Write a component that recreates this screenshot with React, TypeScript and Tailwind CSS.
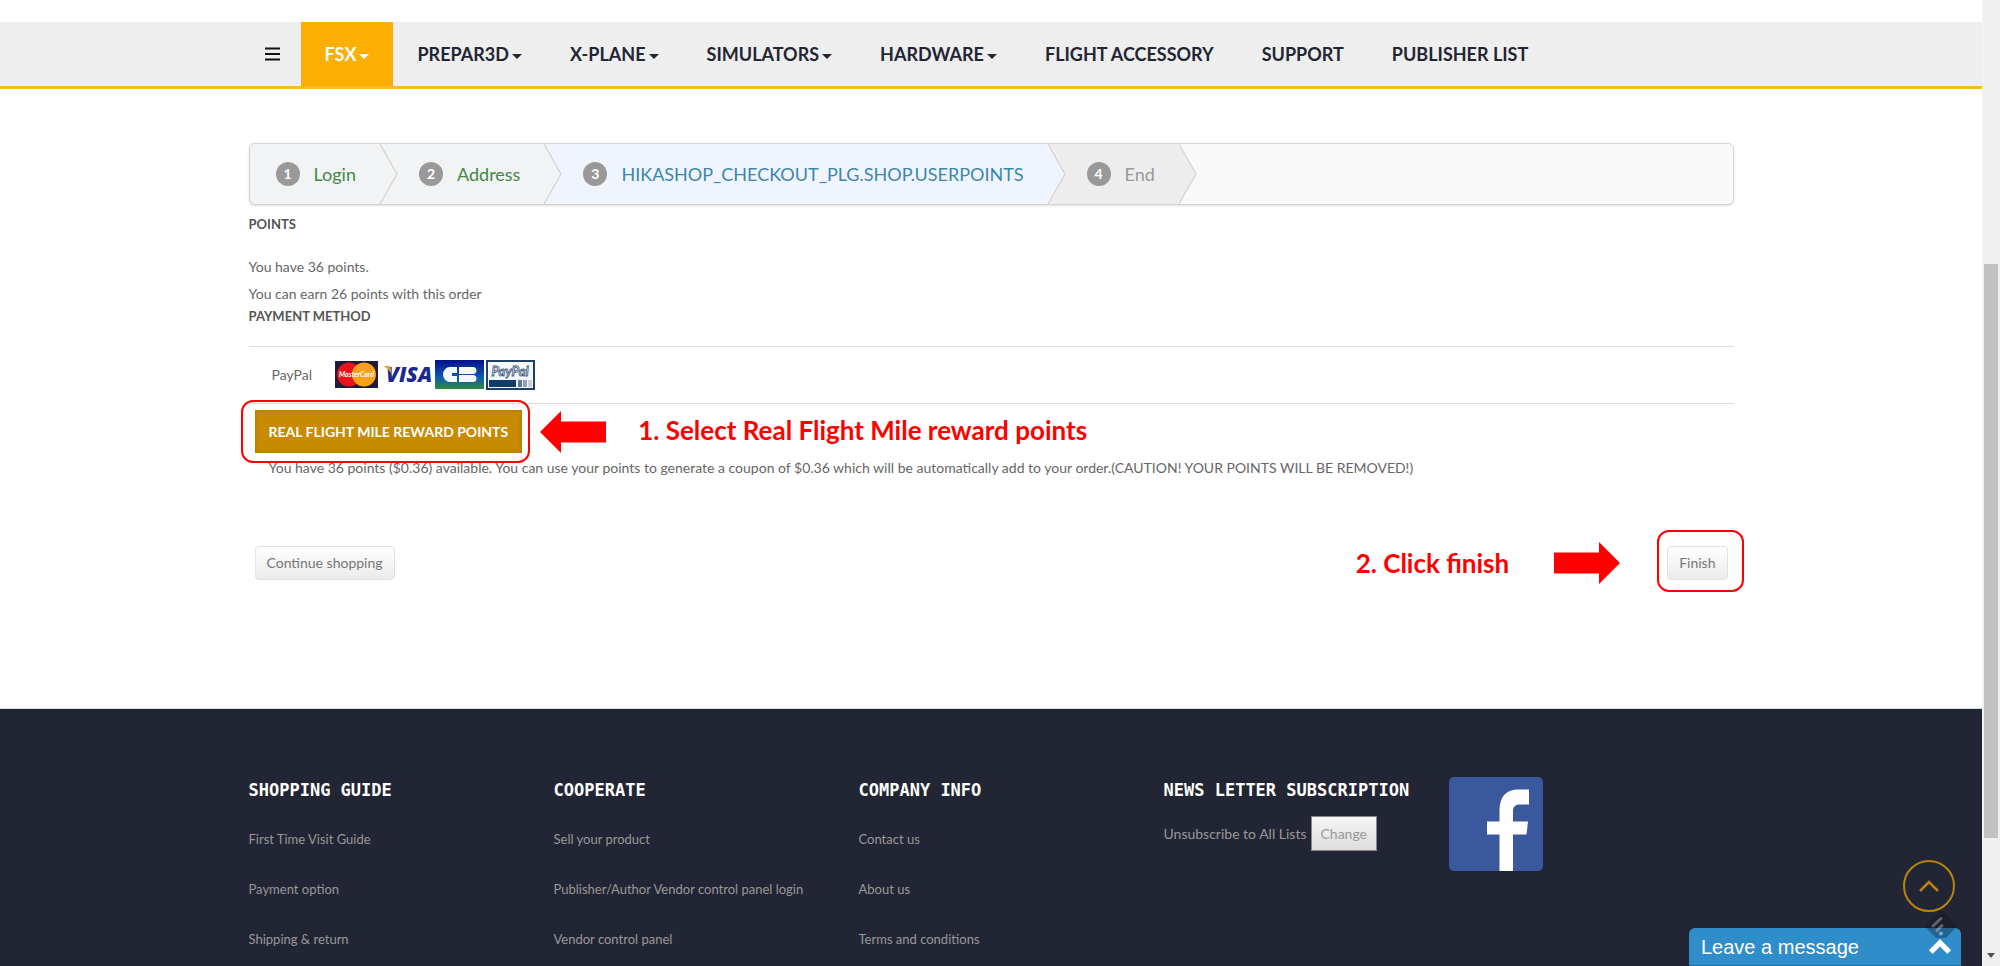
type NavItem = { label: string; caret?: boolean; active?: boolean };
type Step = { label: string; state: "done" | "current" | "next" };
type FooterColumn = { title: string; links: string[] };

const navItems: NavItem[] = [
  { label: "FSX", caret: true, active: true },
  { label: "PREPAR3D", caret: true },
  { label: "X-PLANE", caret: true },
  { label: "SIMULATORS", caret: true },
  { label: "HARDWARE", caret: true },
  { label: "FLIGHT ACCESSORY" },
  { label: "SUPPORT" },
  { label: "PUBLISHER LIST" },
];

const steps: Step[] = [
  { label: "Login", state: "done" },
  { label: "Address", state: "done" },
  { label: "HIKASHOP_CHECKOUT_PLG.SHOP.USERPOINTS", state: "current" },
  { label: "End", state: "next" },
];

const stepStyle = {
  done: { box: "bg-[#f2f3f5] text-[#468847]", fill: "#f2f3f5" },
  current: { box: "bg-[#f0f5fd] text-[#3a87ad]", fill: "#f0f5fd" },
  next: { box: "bg-[#ededed] text-[#999999]", fill: "#ededed" },
};

const footerColumns: FooterColumn[] = [
  { title: "SHOPPING GUIDE", links: ["First Time Visit Guide", "Payment option", "Shipping & return"] },
  { title: "COOPERATE", links: ["Sell your product", "Publisher/Author Vendor control panel login", "Vendor control panel"] },
  { title: "COMPANY INFO", links: ["Contact us", "About us", "Terms and conditions"] },
];

function NavBar() {
  return (
    <nav className="mt-[22px] border-b-[3px] border-[#fbb829] bg-[#eeeeee]">
      <div className="mx-auto flex h-16 max-w-[1485px] items-stretch text-lg font-bold text-[#222533]">
        <button type="button" aria-label="Menu" className="flex w-[52px] items-center pl-4">
          <svg width="15" height="14" viewBox="0 0 15 14" stroke="#111" strokeWidth="2">
            <path d="M0 1.5H15M0 7H15M0 12.5H15" />
          </svg>
        </button>
        {navItems.map((item) => (
          <a
            key={item.label}
            href="#"
            className={`flex items-center gap-[3px] px-6 whitespace-nowrap ${item.active ? "bg-[#fcaf03] text-white" : ""}`}
          >
            {item.label}
            {item.caret && (
              <svg width="10" height="5" viewBox="0 0 10 5" fill="currentColor" className="mt-1">
                <path d="M0 0H10L5 5Z" />
              </svg>
            )}
          </a>
        ))}
      </div>
    </nav>
  );
}

function Steps() {
  return (
    <ol className="flex h-[62px] rounded-md border border-[#d4d4d4] bg-[#f9f9f9] text-lg shadow-sm">
      {steps.map((step, i) => (
        <li
          key={step.label}
          className={`relative flex items-center gap-[14px] pr-6 ${i === 0 ? "rounded-l-md pl-[26px]" : "pl-[39px]"} ${stepStyle[step.state].box}`}
        >
          <span className="flex size-6 items-center justify-center rounded-full bg-[#999999] text-sm font-bold text-white">
            {i + 1}
          </span>
          <span className="whitespace-nowrap">{step.label}</span>
          {/* arrow tip, overlaps the next step */}
          <svg width="18" height="60" viewBox="0 0 18 60" className="absolute top-0 left-full z-10">
            <path d="M0 0L17 30L0 60" fill={stepStyle[step.state].fill} stroke="#d4d4d4" strokeWidth="1.3" />
          </svg>
        </li>
      ))}
    </ol>
  );
}

function CardLogos() {
  return (
    <svg width="201" height="30" viewBox="0 0 201 30" role="img" aria-label="Accepted cards">
      <defs>
        <linearGradient id="cb" x1="0" y1="0" x2="0" y2="1">
          <stop offset="0" stopColor="#04108c" />
          <stop offset="0.6" stopColor="#0c5ab0" />
          <stop offset="1" stopColor="#2e8a3c" />
        </linearGradient>
      </defs>
      <rect y="1" width="43" height="27" fill="#1f1b3d" />
      <circle cx="14" cy="14.5" r="12" fill="#e8141c" />
      <circle cx="29" cy="14.5" r="12" fill="#f9a11b" />
      <text x="21.5" y="17" fontSize="7" fontStyle="italic" fontWeight="bold" fill="#fff" textAnchor="middle" fontFamily="Lato, sans-serif">
        MasterCard
      </text>
      <text x="51" y="22" fontSize="21" fontStyle="italic" fontWeight="800" fill="#1a2a8c" fontFamily="Open Sans, sans-serif">
        VISA
      </text>
      <path d="M48.500 6H55L57 15Q54 9 48.500 6Z" fill="#f0a030" />
      <rect x="100" width="49" height="29" fill="url(#cb)" />
      <path
        d="M122 7H115A7 7.5 0 0 0 115 22H122V16H117V13H122ZM124 7H138A3 3 0 0 1 138 14H124ZM124 15H138A3 3 0 0 1 138 22H124Z"
        fill="#f2f8fc"
      />
      <rect x="152" y="1" width="47" height="28" fill="#f4f8fc" stroke="#1d4068" strokeWidth="2" />
      <text x="175" y="16" fontSize="13" fontStyle="italic" fontWeight="bold" fill="#dfe8f0" stroke="#3c5878" strokeWidth="0.8" textAnchor="middle" fontFamily="Lato, sans-serif">
        PayPal
      </text>
      <rect x="154" y="20" width="27" height="7" fill="#123a6b" />
      <path d="M183 20H187V27H183Z" fill="#5c7898" />
      <path d="M188 20H192V27H188Z" fill="#8ca0b8" />
      <path d="M193 20H197V27H193Z" fill="#c4d0dc" />
    </svg>
  );
}

function Arrow({ flip }: { flip?: boolean }) {
  return (
    <svg width="66" height="42" viewBox="0 0 66 42" fill="#ff0000" className={flip ? "rotate-180" : ""}>
      <path d="M0 21L21 0V10.5H66V31.5H21V42Z" />
    </svg>
  );
}

function SmallButton({ children }: { children: string }) {
  return (
    <button
      type="button"
      className="h-[34px] rounded border border-[#e2e2e2] bg-linear-to-b from-white to-[#ebebeb] px-[11px] text-[#777777]"
    >
      {children}
    </button>
  );
}

function Footer() {
  return (
    <footer className="flex-1 border-t border-[#d8dade] bg-[#222533] text-[#999999]">
      <div className="mx-auto grid max-w-[1485px] grid-cols-[305fr_305fr_305fr_285fr_285fr] pt-[68px]">
        {footerColumns.map((col) => (
          <section key={col.title}>
            <h3 className="font-['DejaVu_Sans_Mono',monospace] text-[17px] leading-[27px] font-bold text-white">{col.title}</h3>
            <ul className="mt-[10px] text-[13px]">
              {col.links.map((link) => (
                <li key={link} className="h-[50px] leading-[50px] whitespace-nowrap">
                  <a href="#">{link}</a>
                </li>
              ))}
            </ul>
          </section>
        ))}
        <section>
          <h3 className="font-['DejaVu_Sans_Mono',monospace] text-[17px] leading-[27px] font-bold whitespace-nowrap text-white">
            NEWS LETTER SUBSCRIPTION
          </h3>
          <div className="mt-3 flex items-center gap-1">
            <span className="whitespace-nowrap">Unsubscribe to All Lists</span>
            <button type="button" className="h-[35px] border border-[#888888] bg-linear-to-b from-[#f5f5f5] to-[#dddddd] px-[9px]">
              Change
            </button>
          </div>
        </section>
        <a href="#" aria-label="Facebook" className="size-[94px]">
          <svg width="94" height="94" viewBox="0 0 94 94">
            <rect width="94" height="94" rx="5" fill="#3b579d" />
            <path
              d="M50.5 94V57.5H38V44.5H50.5V33C50.5 19 58 12.5 69 12.5H80V27.5H71.5C65.500 27.5 64 30 64 35V44.5H79L77.500 57.5H64V94Z"
              fill="#fff"
            />
          </svg>
        </a>
      </div>
    </footer>
  );
}

function ScrollBar() {
  return (
    <div className="relative h-full w-[18px] shrink-0 border-l border-[#f6f6f6] bg-[#f0f0f0] pr-[2px] pl-px">
      <div className="h-[27.3%]" />
      <div className="h-[59.5%] bg-[#c1c1c1]" />
      <svg width="8" height="5" viewBox="0 0 8 5" className="absolute bottom-2 left-1" fill="#505050">
        <path d="M0 0H8L4 5Z" />
      </svg>
    </div>
  );
}

export default function App() {
  return (
    <div className="flex h-screen overflow-hidden bg-white font-['Lato',sans-serif] text-sm text-[#666666]">
      <div className="relative flex min-w-0 flex-1 flex-col">
        <NavBar />

        <main className="mx-auto w-full max-w-[1485px] pt-[54px] pb-[124px]">
          <Steps />

          <h2 className="mt-1 text-[13px] leading-[30px] font-bold text-[#555555]">POINTS</h2>
          <p className="mt-[14px] leading-[27px]">You have 36 points.</p>
          <p className="leading-[27px]">You can earn 26 points with this order</p>
          <h2 className="text-[13px] leading-[18px] font-bold text-[#555555]">PAYMENT METHOD</h2>

          <div className="mt-[21px] flex h-[58px] items-center gap-[23px] border-y border-[#dddddd] pl-[23px]">
            <span>PayPal</span>
            <CardLogos />
          </div>

          <div className="mt-[6px] flex items-center pl-[6px]">
            <div className="relative">
              <button
                type="button"
                className="block h-[43px] bg-[#c88a00] px-[14px] font-bold whitespace-nowrap text-white shadow-[inset_0_0_4px_#a87400]"
              >
                REAL FLIGHT MILE REWARD POINTS
              </button>
              <div className="absolute -top-[10px] -right-2 -bottom-[10px] -left-[14px] rounded-xl border-2 border-[#ff0000]" />
            </div>
            <div className="ml-[18px] flex items-center gap-8 text-[26px] leading-8 font-bold text-[#ff0000]">
              <Arrow />
              <span className="pb-1 whitespace-nowrap">1. Select Real Flight Mile reward points</span>
            </div>
          </div>
          <p className="mt-[3px] pl-5 leading-6">
            You have 36 points ($0.36) available. You can use your points to generate a coupon of $0.36 which will be
            automatically add to your order.(CAUTION! YOUR POINTS WILL BE REMOVED!)
          </p>

          <div className="mt-[62px] flex items-center justify-between px-[6px]">
            <SmallButton>Continue shopping</SmallButton>
            <div className="flex items-center">
              <span className="text-[26px] leading-8 font-bold text-[#ff0000]">2. Click finish</span>
              <div className="mr-[47px] ml-[45px]">
                <Arrow flip />
              </div>
              <div className="relative">
                <SmallButton>Finish</SmallButton>
                <div className="absolute -top-4 -right-4 -bottom-3 -left-[10px] rounded-xl border-2 border-[#ff0000]" />
              </div>
            </div>
          </div>
        </main>

        <Footer />

        <button
          type="button"
          aria-label="Back to top"
          className="absolute right-[27px] bottom-[54px] flex size-[52px] items-center justify-center rounded-full border-2 border-[#b98310] text-[#b98310]"
        >
          <svg width="20" height="12" viewBox="0 0 20 12" fill="none" stroke="currentColor" strokeWidth="2.5">
            <path d="M1 11L10 2L19 11" />
          </svg>
        </button>
        <button
          type="button"
          className="absolute right-[21px] bottom-0 flex h-[38px] w-[272px] items-center justify-between rounded-t-md border-b border-[#1f6ea5] bg-[#2f8dc9] pr-[10px] pl-3 font-['Liberation_Sans',sans-serif] text-xl text-white"
        >
          Leave a message
          <svg width="22" height="15" viewBox="0 0 22 15" fill="#fff">
            <path d="M11 0L22 11L18.500 15L11 7.500L3.500 15L0 11Z" />
          </svg>
        </button>
        <svg width="32" height="32" viewBox="0 0 32 32" className="absolute right-[25px] bottom-6">
          <path d="M14 1.500Q16 0 18 1.500L30.500 14Q32 16 30.500 18L21 28H11L1.500 18Q0 16 1.500 14Z" fill="#14161f" fillOpacity="0.35" />
          <path d="M8 16L16 8.500M12 20.500L17 15.500" stroke="#fff" strokeOpacity="0.3" strokeWidth="3" strokeLinecap="round" />
          <circle cx="16" cy="23.500" r="2" fill="#8fd0f5" fillOpacity="0.7" />
        </svg>
      </div>
      <ScrollBar />
    </div>
  );
}
